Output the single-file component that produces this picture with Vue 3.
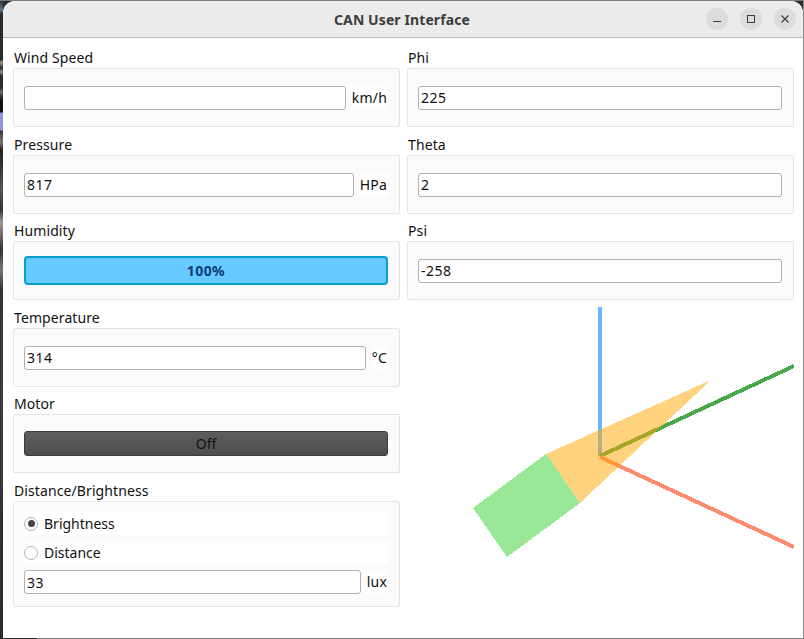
<script setup>
const leftGroups = [
  { title: 'Wind Speed', value: '', unit: 'km/h' },
  { title: 'Pressure', value: '817', unit: 'HPa' },
]
const rightGroups = [
  { title: 'Phi', value: '225' },
  { title: 'Theta', value: '2' },
  { title: 'Psi', value: '-258' },
]
</script>

<template>
  <div class="desktop">
    <div class="window">
      <header class="titlebar">
        <span class="title">CAN User Interface</span>
        <div class="controls">
          <button class="ctl" type="button" aria-label="Minimize">
            <svg width="16" height="16" viewBox="0 0 16 16"><path d="M4 10.5h8" stroke="#3d3d3d" stroke-width="1" fill="none" /></svg>
          </button>
          <button class="ctl" type="button" aria-label="Maximize">
            <svg width="16" height="16" viewBox="0 0 16 16"><rect x="4.5" y="4.5" width="7" height="7" stroke="#3d3d3d" stroke-width="1" fill="none" /></svg>
          </button>
          <button class="ctl" type="button" aria-label="Close">
            <svg width="16" height="16" viewBox="0 0 16 16"><path d="M4.5 4.5l7 7M11.5 4.5l-7 7" stroke="#3d3d3d" stroke-width="1.2" fill="none" /></svg>
          </button>
        </div>
      </header>

      <main class="content">
        <div class="col">
          <section v-for="g in leftGroups" :key="g.title" class="group">
            <div class="label">{{ g.title }}</div>
            <div class="box">
              <div class="field">
                <input class="input" type="text" :value="g.value" />
                <span class="unit">{{ g.unit }}</span>
              </div>
            </div>
          </section>

          <section class="group">
            <div class="label">Humidity</div>
            <div class="box">
              <div class="bar">100%</div>
            </div>
          </section>

          <section class="group">
            <div class="label">Temperature</div>
            <div class="box">
              <div class="field">
                <input class="input" type="text" value="314" />
                <span class="unit">°C</span>
              </div>
            </div>
          </section>

          <section class="group">
            <div class="label">Motor</div>
            <div class="box">
              <button class="motor" type="button">Off</button>
            </div>
          </section>

          <section class="group">
            <div class="label">Distance/Brightness</div>
            <div class="box box-radio">
              <label class="radio">
                <span class="dot on"></span>
                Brightness
              </label>
              <label class="radio">
                <span class="dot"></span>
                Distance
              </label>
              <div class="field">
                <input class="input" type="text" value="33" />
                <span class="unit">lux</span>
              </div>
            </div>
          </section>
        </div>

        <div class="col">
          <section v-for="g in rightGroups" :key="g.title" class="group">
            <div class="label">{{ g.title }}</div>
            <div class="box">
              <div class="field">
                <input class="input" type="text" :value="g.value" />
              </div>
            </div>
          </section>

          <!-- attitude view: axes underneath, translucent body on top -->
          <svg class="view" width="387" height="300" viewBox="407 303 387 300" shape-rendering="crispEdges">
            <path d="M600 307V456" stroke="#6db6ff" stroke-width="4" />
            <path d="M600 456L794 366" stroke="#4ca64c" stroke-width="4" />
            <path d="M600 457L794 547" stroke="#ff8a70" stroke-width="4" />
            <polygon points="546,454 711,380 580,503" fill="#ffa500" fill-opacity="0.5" />
            <polygon points="546,454 580,503 507,557 473,508" fill="#98e898" />
          </svg>
        </div>
      </main>
    </div>
  </div>
</template>

<style scoped>
.desktop {
  width: 804px;
  height: 639px;
  padding: 1px 0 0 3px;
  box-sizing: border-box;
  overflow: hidden;
  /* what shows of the desktop behind the window */
  background:
    linear-gradient(#7d7d7d, #7d7d7d) 0 0 / 100% 1px no-repeat,
    linear-gradient(#8a8a8a, #8a8a8a) 100% 0 / 1px 100% no-repeat,
    linear-gradient(#858585, #858585) 37px 100% / 100% 1px no-repeat,
    linear-gradient(
      #2b2b2b 0, #5a7a90 10px, #2b2b2b 14px, #2b2b2b 60px, #9a9a9a 62px, #2b2b2b 68px, #8a8a8a 72px, #2b2b2b 76px,
      #2b2b2b 88px, #6a6a6a 92px, #111 100px, #111 112px, #8f95d8 113px, #8f95d8 130px, #333 131px, #777 142px, #222 150px,
      #3a3a3a 170px, #555 190px, #333 210px, #999 222px, #777 232px, #333 250px, #777 270px, #333 290px, #3a3a3a 400px, #2b2b2b 639px
    ) 0 0 / 3px 100% no-repeat,
    #2b2b2b;
}
.window {
  box-sizing: border-box;
  width: 800px;
  height: 637px;
  background: #fff;
  border-radius: 12px 12px 0 0;
  overflow: hidden;
  font-family: "Noto Sans", "Open Sans", sans-serif;
  font-size: 14px;
  color: #111;
}
.titlebar {
  position: relative;
  box-sizing: border-box;
  height: 37px;
  padding-right: 2px;
  display: flex;
  align-items: center;
  justify-content: center;
  background: #ebebeb;
  border-bottom: 1px solid #b9b9b9;
}
.title {
  font-weight: 700;
  font-size: 14px;
  letter-spacing: 0.1px;
  color: #3d3d3d;
}
.controls {
  position: absolute;
  right: 7px;
  top: 7px;
  display: flex;
  gap: 12px;
}
.ctl {
  width: 22px;
  height: 22px;
  padding: 0;
  border: 0;
  border-radius: 50%;
  background: #dcdcdc;
  display: flex;
  align-items: center;
  justify-content: center;
}
.content {
  display: grid;
  grid-template-columns: 387px 387px;
  column-gap: 7px;
  padding: 10px 0 0 10px;
}
.col {
  display: flex;
  flex-direction: column;
}
.label {
  height: 20px;
  line-height: 20px;
  padding-left: 1px;
  letter-spacing: 0.1px;
}
.group {
  margin-bottom: 8px;
}
.group:nth-child(even) {
  margin-bottom: 7px;
}
.box {
  box-sizing: border-box;
  height: 59px;
  padding: 0 11px 0 10px;
  display: flex;
  flex-direction: column;
  justify-content: center;
  background: #fbfbfb;
  border: 1px solid #e4e4e4;
  border-radius: 2px;
}
.field {
  display: flex;
  align-items: center;
  gap: 6px;
}
.input {
  box-sizing: border-box;
  flex: 1;
  min-width: 0;
  width: 100%;
  height: 24px;
  padding: 0 2px;
  background: #fff;
  border: 1px solid #b0b0b0;
  border-radius: 3px;
  font: inherit;
  letter-spacing: 0.5px;
  color: #111;
  outline: none;
}
.unit {
  line-height: 24px;
  padding-right: 1px;
  letter-spacing: 0.2px;
  background: #fff;
}
.bar {
  box-sizing: border-box;
  height: 29px;
  line-height: 25px;
  text-align: center;
  font-weight: 700;
  font-size: 14px;
  letter-spacing: 0.4px;
  color: #0a3f78;
  background: #66c9ff;
  border: 2px solid #0a9ccc;
  border-radius: 4px;
}
.motor {
  box-sizing: border-box;
  width: 100%;
  height: 25px;
  padding: 0;
  font: inherit;
  color: #111;
  background: linear-gradient(#5e5e5e, #4e4e4e);
  border: 1px solid #3c3c3c;
  border-radius: 3px;
}
.box-radio {
  height: 106px;
  justify-content: flex-start;
  padding-top: 10px;
}
.radio {
  height: 23px;
  margin-bottom: 6px;
  display: flex;
  align-items: center;
  gap: 6px;
  background: #fff;
}
.dot {
  box-sizing: border-box;
  width: 14px;
  height: 14px;
  border: 1px solid #b5b5b5;
  border-radius: 50%;
  background: #fff;
  display: flex;
  align-items: center;
  justify-content: center;
}
.dot.on::after {
  content: "";
  width: 7px;
  height: 7px;
  border-radius: 50%;
  background: #444;
}
.view {
  display: block;
  margin-top: -5px;
}
</style>

<style>
html,
body {
  background: #2b2b2b;
  overflow: hidden;
}
</style>
